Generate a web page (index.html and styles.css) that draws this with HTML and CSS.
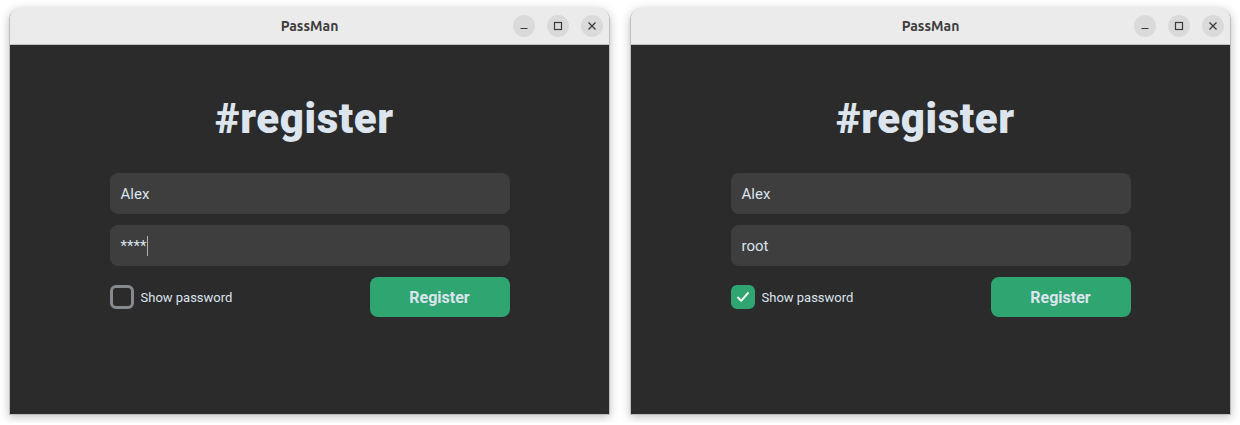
FILE: index.html
```html
<!DOCTYPE html>
<html>
<head>
<meta charset="utf-8">
<link rel="stylesheet" href="styles.css">
</head>
<body>
<div class="desk">
  <div class="window">
    <div class="titlebar">
      <span class="title">PassMan</span>
      <div class="controls">
        <span class="ctl"><svg width="10" height="10" viewBox="0 0 10 10"><path d="M1.5 7.5h7" stroke="#3a3a3a" stroke-width="1.2"/></svg></span>
        <span class="ctl"><svg width="10" height="10" viewBox="0 0 10 10"><rect x="1.5" y="1.5" width="7" height="7" fill="none" stroke="#3a3a3a" stroke-width="1.2"/></svg></span>
        <span class="ctl"><svg width="10" height="10" viewBox="0 0 10 10"><path d="M1.5 1.5l7 7M8.5 1.5l-7 7" stroke="#3a3a3a" stroke-width="1.3"/></svg></span>
      </div>
    </div>
    <div class="content">
      <h1 class="heading">#register</h1>
      <div class="field"><span class="value">Alex</span></div>
      <div class="field"><span class="value">****</span><span class="caret"></span></div>
      <div class="row">
        <label class="check"><span class="box"></span><span class="label">Show password</span></label>
        <button class="btn">Register</button>
      </div>
    </div>
  </div>
  <div class="window">
    <div class="titlebar">
      <span class="title">PassMan</span>
      <div class="controls">
        <span class="ctl"><svg width="10" height="10" viewBox="0 0 10 10"><path d="M1.5 7.5h7" stroke="#3a3a3a" stroke-width="1.2"/></svg></span>
        <span class="ctl"><svg width="10" height="10" viewBox="0 0 10 10"><rect x="1.5" y="1.5" width="7" height="7" fill="none" stroke="#3a3a3a" stroke-width="1.2"/></svg></span>
        <span class="ctl"><svg width="10" height="10" viewBox="0 0 10 10"><path d="M1.5 1.5l7 7M8.5 1.5l-7 7" stroke="#3a3a3a" stroke-width="1.3"/></svg></span>
      </div>
    </div>
    <div class="content">
      <h1 class="heading">#register</h1>
      <div class="field"><span class="value">Alex</span></div>
      <div class="field"><span class="value">root</span></div>
      <div class="row">
        <label class="check"><span class="box checked"><svg width="16" height="16" viewBox="0 0 16 16"><path d="M3 8.5l3.2 3.3L13 4" fill="none" stroke="#f2f2f2" stroke-width="2" stroke-linecap="round" stroke-linejoin="round"/></svg></span><span class="label">Show password</span></label>
        <button class="btn">Register</button>
      </div>
    </div>
  </div>
</div>
</body>
</html>
```
FILE: styles.css
```css
html, body {
  margin: 0;
  padding: 0;
  background: #ffffff;
}
.desk {
  display: flex;
  gap: 20px;
  padding: 8px 9px;
}
.window {
  width: 601px;
  height: 407px;
  display: flex;
  flex-direction: column;
  border: 1px solid #bdbdbd;
  border-top: none;
  border-radius: 12px 12px 0 0;
  box-sizing: border-box;
  overflow: hidden;
  box-shadow: 0 2px 10px rgba(0,0,0,0.25);
}
.titlebar {
  height: 37px;
  box-sizing: border-box;
  background: #ebebeb;
  border-bottom: 1px solid #c4c4c4;
  position: relative;
  display: flex;
  align-items: center;
  justify-content: center;
  font-family: "Ubuntu", "Noto Sans", "DejaVu Sans", sans-serif;
}
.title {
  font-weight: bold;
  font-size: 14px;
  color: #3d3d3d;
}
.controls {
  position: absolute;
  right: 6px;
  top: 7px;
  display: flex;
  gap: 12px;
}
.ctl {
  width: 22px;
  height: 22px;
  border-radius: 50%;
  background: #dadada;
  display: flex;
  align-items: center;
  justify-content: center;
}
.content {
  flex: 1;
  background: #2b2b2b;
  display: flex;
  flex-direction: column;
  align-items: center;
  font-family: Roboto, "Liberation Sans", sans-serif;
  color: #dce4ee;
}
.heading {
  margin: 50px 0 30px;
  padding-right: 10px;
  font-size: 42px;
  font-weight: 900;
  letter-spacing: 0.6px;
  line-height: 48px;
  height: 48px;
}
.field {
  width: 400px;
  height: 41px;
  box-sizing: border-box;
  background: #3e3e3e;
  border-radius: 8px;
  margin-bottom: 11px;
  display: flex;
  align-items: center;
  padding-left: 11px;
  font-size: 15px;
}
.caret {
  width: 1px;
  height: 20px;
  background: #b0b0b0;
  margin-left: 1px;
}
.row {
  width: 400px;
  display: flex;
  justify-content: space-between;
  align-items: center;
}
.check {
  display: flex;
  align-items: center;
  gap: 7px;
  font-size: 13px;
}
.box {
  width: 24px;
  height: 24px;
  box-sizing: border-box;
  border: 3px solid #868a8e;
  border-radius: 6px;
  display: flex;
  align-items: center;
  justify-content: center;
}
.box.checked {
  background: #2fa572;
  border-color: #2fa572;
}
.btn {
  width: 140px;
  height: 40px;
  border: none;
  border-radius: 8px;
  background: #2fa572;
  color: #dce4ee;
  font-family: Roboto, "Liberation Sans", sans-serif;
  font-weight: bold;
  font-size: 16px;
}
```
